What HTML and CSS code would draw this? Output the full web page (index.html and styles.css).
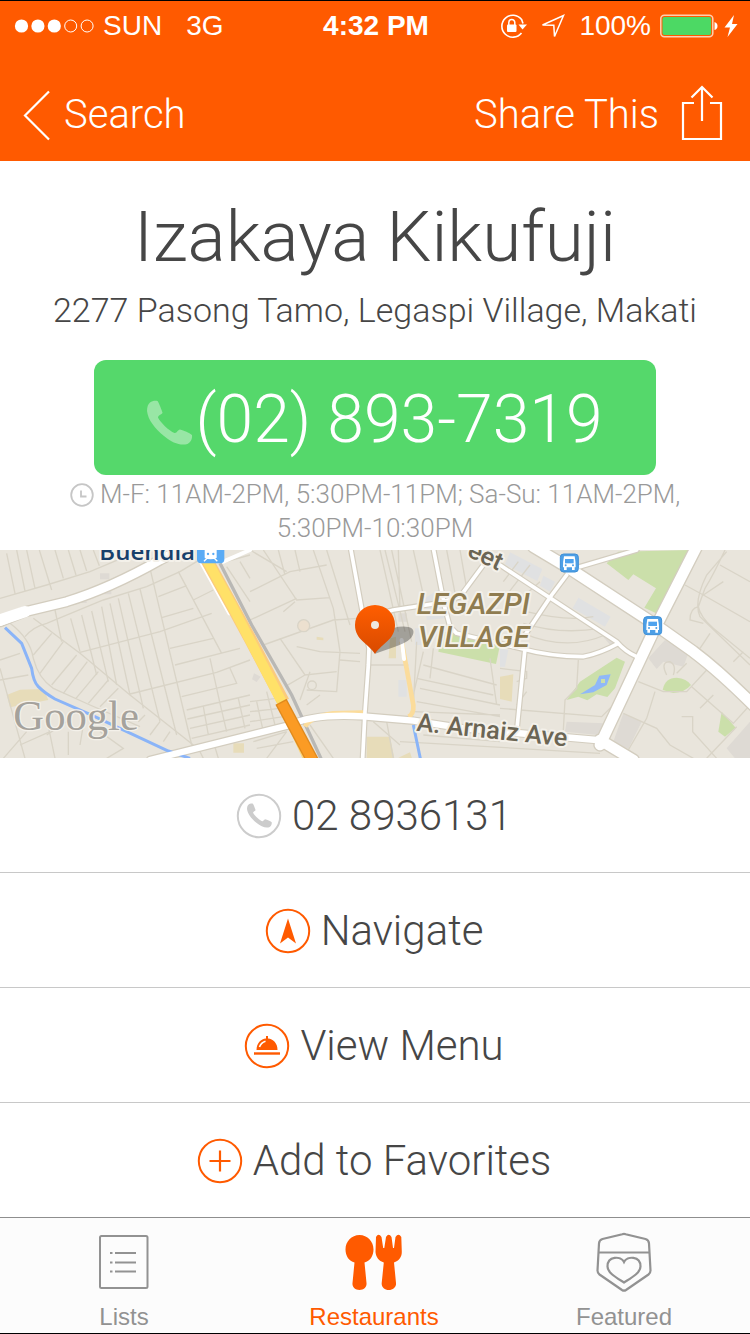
FILE: index.html
```html
<!DOCTYPE html>
<html lang="en">
<head>
<meta charset="utf-8">
<meta name="viewport" content="width=device-width, initial-scale=1">
<title>Izakaya Kikufuji</title>
<link rel="stylesheet" href="styles.css">
</head>
<body>
<header class="top">
  <div class="status">
    <div class="status-side">
      <svg class="signal" width="80" height="14" viewBox="0 0 80 14" aria-hidden="true">
        <g fill="#fff"><circle cx="7.500" cy="7" r="6.600"/><circle cx="23.900" cy="7" r="6.600"/><circle cx="40.300" cy="7" r="6.600"/></g>
        <g fill="none" stroke="#fff"><circle cx="56.700" cy="7" r="6"/><circle cx="73.100" cy="7" r="6"/></g>
      </svg>
      <span class="carrier">SUN</span>
      <span>3G</span>
    </div>
    <div class="clock">4:32 PM</div>
    <div class="status-side status-end">
      <svg width="28" height="24" viewBox="0 0 28 24" aria-hidden="true">
        <path d="M22.500 19A11 11 0 1 1 22.600 5.500L24 9.500" fill="none" stroke="#fff" stroke-width="1.600"/>
        <path d="M19.500 10.500H28L23.500 15.500z" fill="#fff"/>
        <path d="M9.800 11V8.500a3 3 0 0 1 6 0V11" fill="none" stroke="#fff" stroke-width="1.500"/>
        <rect x="8" y="10.500" width="9.500" height="7.500" rx="1" fill="#fff"/>
      </svg>
      <svg class="arrow" width="24" height="24" viewBox="0 0 24 24" aria-hidden="true">
        <path d="M22.500 1.500L13.500 22.500L12.800 11.200L1.500 11z" fill="none" stroke="#fff" stroke-width="1.500"/>
      </svg>
      <span class="percent">100%</span>
      <svg class="battery" width="78" height="24" viewBox="0 0 78 24" aria-hidden="true">
        <rect x=".8" y="1.300" width="52" height="21.400" rx="3.500" fill="none" stroke="#ffd0b0" stroke-width="1.500"/>
        <rect x="2.500" y="3" width="48.600" height="18" rx="2" fill="#4cd964"/>
        <path d="M54.500 8q3 1 3 4t-3 4z" fill="#fff"/>
        <path d="M74 1L64.500 13.500H70L67.500 23L77.500 10H72z" fill="#fff"/>
      </svg>
    </div>
  </div>
  <nav class="navbar" aria-label="Page">
    <a class="nav-link" href="#search">
      <svg width="28" height="52" viewBox="0 0 28 52" aria-hidden="true"><path d="M27 2.500L3 26.500L27 50.500" fill="none" stroke="#fff" stroke-width="2.200"/></svg>
      <span class="back-label">Search</span>
    </a>
    <button class="nav-link" type="button">
      <span>Share This</span>
      <svg class="share-icon" width="42" height="56" viewBox="0 0 42 56" aria-hidden="true"><path d="M13 18H2V54H40V18H29M21 36V2.500M10.500 12.500L21 2L31.500 12.500" fill="none" stroke="#fff" stroke-width="2.200"/></svg>
    </button>
  </nav>
</header>

<main>
  <section class="details">
    <h1 class="name">Izakaya Kikufuji</h1>
    <p class="address">2277 Pasong Tamo, Legaspi Village, Makati</p>
    <a class="call" href="tel:028937319">
      <svg class="call-icon" width="48" height="48" viewBox="0 0 48 48" aria-hidden="true"><use href="#handset"/></svg>
      <span>(02) 893-7319</span>
    </a>
    <p class="hours">
      <svg class="hours-icon" width="24" height="24" viewBox="0 0 24 24" aria-hidden="true"><circle cx="12" cy="12" r="10.800" fill="none" stroke="#c6c6c6" stroke-width="1.800"/><path d="M11 7.500V13.500H16.500" fill="none" stroke="#c6c6c6" stroke-width="1.800"/></svg>
      M-F: 11AM-2PM, 5:30PM-11PM; Sa-Su: 11AM-2PM, 5:30PM-10:30PM
    </p>
  </section>

  <svg class="map" viewBox="0 15 2250 624" preserveAspectRatio="xMidYMid slice" role="img" aria-label="Map of Legazpi Village">
    <defs>
      <linearGradient id="pinFill" x1="0" y1="0" x2="0" y2="1"><stop offset="0" stop-color="#ff5e00"/><stop offset="1" stop-color="#d84a00"/></linearGradient>
      <path id="handset" d="M3 2.500C5 .8 9 .2 10.800 1.200C12.500 4 14 8.500 15.500 12.500C15.500 14.500 11 15 11 17.500C13 22 22 31 27.500 33C30 33.500 30.500 30 33 29.600C37 30.500 42 33 45 35C45.500 39 43.500 42.500 40.500 44C33.500 46 25.500 43 17 36C8 28.500 1 20 0 11C0 7 1 4 3 2.500Z"/>
      <g id="bus">
        <rect x="-27" y="-27" width="54" height="54" rx="10" fill="#4d9fe6" stroke="#3e8fd6" stroke-width="3"/>
        <path d="M-16-20H16Q20 0 19 13H-19Q-20 0-16-20Z" fill="#fff"/>
        <rect x="-13" y="-12" width="26" height="13" fill="#4fa3ee"/>
        <path d="M-16 12h8v9h-8zM8 12h8v9h-8z" fill="#fff"/>
        <circle cx="-11" cy="7" r="3" fill="#4d9fe6"/><circle cx="11" cy="7" r="3" fill="#4d9fe6"/>
      </g>
    </defs>
    <rect y="0" width="2250" height="660" fill="#e9e5dc"/>

    <g fill="#dedad4">
      <path d="M1995 285L2065 325L2050 365L1990 350L1970 372L1945 340ZM1870 505L1925 530L1885 612L1840 590ZM1700 530L1810 535L1795 570L1695 560ZM2180 610L2250 530V640H2205ZM1805 270L1845 285L1835 305Z"/>
      <path d="M300 85h28v18h-28zM312 130h22v18h-22zM240 160h20v14h-20zM762 385l20 10-12 16-14-8zM1195 205h26v25h-26z"/>
    </g>
    <path d="M1530 22L1627 72L1612 108L1515 58ZM1630 92L1665 110L1650 140L1620 122ZM1735 158L1832 215L1815 245L1718 190ZM1275 160l45-30 15 90-55 5zM1245 250h25v50h-25zM1195 405h25v50h-25zM1500 310l25 5-10 50h-15z" fill="#e0e1e2"/>
    <path d="M20 450L60 434L130 432L145 465L30 487ZM700 595h32v28h-32zM1100 575H1170L1183 640H1100ZM1195 638L1230 622L1236 640ZM1500 395L1540 388L1535 470L1500 462ZM1170 280l18-5v65h-22zM950 275l20 3v8l-20-2z" fill="#e7dcb9"/>
    <g fill="#cbdfaa">
      <path d="M1855 20L2070 15L1975 208L1933 188L1968 130L1900 88L1885 105L1820 55Z"/>
      <path d="M1700 465L1740 410L1850 338L1875 350L1845 430L1822 456L1790 448L1762 466L1735 455Z"/>
      <path d="M1988 435Q1995 398 2030 398Q2060 400 2073 420Q2055 442 2020 444Z"/>
      <path d="M2165 500L2207 548L2175 575L2155 560Z"/>
      <path d="M1325 258L1500 300L1488 357L1315 320Z"/>
    </g>
    <path d="M1740 448L1785 420L1798 392L1832 388L1820 420L1780 442ZM1803 402v12h12v-12z" fill="#8fb8f8" fill-rule="evenodd"/>

    <g class="parcels" fill="none" stroke="#d9d4c7" stroke-width="4">
      <path d="M20 25L45 145M50 15L75 138M80 15L105 130M118 15L155 135M165 15L190 100M205 15L228 90M240 15L260 78M280 15L298 62M320 15L335 45M0 160L140 120L270 80L400 25"/>
      <path d="M30 235Q90 280 100 340Q115 400 160 430L270 480L420 545M75 275Q100 245 140 235L310 165L440 125L540 80L640 20M100 220L240 325L390 450L580 600"/>
      <path d="M100 330L155 265M120 385L190 290M155 420L230 330M190 445L262 350M228 460L295 380M265 475L325 405M300 485L355 430M415 530L435 510M450 570L480 530M490 590L510 560"/>
      <path d="M165 195L185 290M212 220L240 320M245 210L290 390M275 198L325 410M305 185L350 420M330 175L390 450M355 160L430 490M385 145L480 530M420 132L530 570M450 70L575 600"/>
      <path d="M240 322L480 260L635 205M390 447L650 382L750 345M475 155L560 122M485 218L580 190M510 310L640 280M525 360L720 310M545 455L710 415L690 370M560 495L750 450M562 522L750 480M570 550L750 510M575 580L750 540M535 80L665 325M630 340L660 475M610 485L625 570M660 475L680 560M715 460L735 550M580 165L640 135"/>
      <path d="M0 345L60 325M0 405L85 390M0 370L75 640M205 560V630M140 520L165 640M200 530L140 570M250 540L240 600M300 560L370 610L320 640M80 560L10 640M60 600L150 560"/>
      <path d="M660 55L750 30M680 65L750 170M720 50L750 100M590 600L610 640M640 590L655 640"/>
      <path d="M750 140L870 80L980 60M790 15L890 165L990 158M835 15L855 90M885 15L900 80M940 15L1000 190L1020 320M980 15L1050 240M790 300L1000 225L1075 220M750 225L890 160M860 80L750 15"/>
      <path d="M890 305L960 320L1080 325M840 280L915 390L1010 380M915 390L855 425M1020 320L1010 440L920 435M1080 350L1020 345M960 450L920 480M885 170L850 200M1110 360H1225M930 380L900 465"/>
      <path d="M1140 15L1195 260M1155 15L1215 260M1175 15L1235 290M1195 15L1200 200M1240 15L1270 150M1340 15L1370 170M1380 15L1400 130M1250 290L1240 480M1250 400L1480 450M1270 360L1490 420M1260 430L1500 480M1250 470L1500 515M1300 310L1290 400M1270 320L1240 450M1470 340L1490 480M1240 500L1500 510M1200 590L1550 610L1800 625M1270 570L1500 590M1120 530L1200 600"/>
      <path d="M750 470L830 460M750 500L840 490M750 530L850 515M770 470L790 560M800 440L825 540M760 590L860 560M770 610L880 590M860 560L800 640M930 540L1000 640M1160 530L1180 640"/>
      <path d="M1580 200Q1700 230 1780 215M1570 235Q1680 270 1800 250M1570 265Q1700 320 1815 270M1510 110L1555 50M1520 150L1590 60M1530 190L1620 110M1735 345L1730 430L1695 465L1690 555M1500 490L1805 515L1840 480M1580 440L1550 480M1500 370L1580 380V400L1550 410"/>
      <path d="M2180 20L2120 90Q2080 170 2100 215L2250 360M2175 15Q2140 90 2115 130L2095 185Q2100 215 2140 250L2250 340M2055 120L2110 150L2250 230M2160 60L2250 110M2110 150L2170 110M2095 185Q2070 190 2070 225L2110 235M2130 265L2100 310M2230 320L2200 350M1915 410L1990 440L2060 440L2120 375M2075 425L2200 535L2250 480M2120 640L2210 545M1870 505L1970 550L2010 600L2080 640M1965 440L1940 520L1885 615M2000 390Q1980 350 2010 350Q2030 360 2020 390M2030 385L2060 355M2100 490L2140 450M2045 515H2078V560L2150 640"/>
      <circle cx="911" cy="242" r="18" fill="#ece0cf"/><circle cx="936" cy="421" r="13" fill="#e9e5dc"/>
    </g>

    <g class="casing">
      <path d="M0 230L75 200L200 170Q330 130 480 45L540 15" stroke-width="34"/>
      <path d="M450 645L750 570L870 540Q940 505 1090 514L1240 527L1390 550L1790 585" stroke-width="26"/>
      <path d="M1600 5L1700 65L1960 235L2080 320Q2160 380 2265 485M2090 5L1960 260L1800 600M1800 585L1900 645" stroke-width="40"/>
      <path d="M1052 10L1085 190L1107 310L1105 360L1095 500L1088 640M1125 210L1180 195L1310 175L1380 155L1450 60M1300 10L1335 190L1350 245L1370 265L1560 310Q1650 335 1750 335Q1800 325 1855 295M1500 60L1850 290Q1875 320 1910 335M1700 90L1655 150L1575 270M1575 310L1550 560M1740 65L1910 15" stroke-width="18"/>
    </g>
    <path d="M660 55L755 240L875 450L965 645" fill="none" stroke="#b9b8b5" stroke-width="10"/>
    <path d="M15 248L65 295L95 370Q100 410 115 425Q135 445 165 462L270 508L505 618L570 640M1240 540L1262 645" fill="none" stroke="#8ab4f8" stroke-width="9"/>
    <path d="M915 545Q930 515 1000 505L1090 503M1205 290L1240 480Q1242 508 1225 515" fill="none" stroke="#fbdc9b" stroke-width="14"/>
    <g class="roads">
      <path d="M0 225L75 200" stroke-width="34"/>
      <path d="M0 230L75 200L200 170Q330 130 480 45L540 15" stroke-width="26"/>
      <path d="M450 645L750 570L870 540Q940 505 1090 514L1240 527L1390 550L1790 585" stroke-width="19"/>
      <path d="M1600 5L1700 65L1960 235L2080 320Q2160 380 2265 485M2090 5L1960 260L1800 600M1800 585L1900 645" stroke-width="32"/>
      <path d="M1052 10L1085 190L1107 310L1105 360L1095 500L1088 640M1125 210L1180 195L1310 175L1380 155L1450 60M1300 10L1335 190L1350 245L1370 265L1560 310Q1650 335 1750 335Q1800 325 1855 295M1500 60L1850 290Q1875 320 1910 335M1700 90L1655 150L1575 270M1575 310L1550 560M1740 65L1910 15" stroke-width="11"/>
      <path d="M670 50L750 15M605 55L688 205M640 55L692 152M1205 285L1212 342" stroke-width="12"/>
    </g>
    <path d="M872 545L915 640" fill="none" stroke="#fbd67c" stroke-width="14"/>
    <path d="M615 35L695 180L755 290L850 470" fill="none" stroke="#fbcb7c" stroke-width="38"/>
    <path d="M615 35L695 180L752 290L845 470" fill="none" stroke="#ffe168" stroke-width="30"/>
    <path d="M843 470L942 655" fill="none" stroke="#e08a1e" stroke-width="38"/>
    <path d="M845 474L942 655" fill="none" stroke="#fb9b24" stroke-width="30"/>

    <g transform="translate(632 29)">
      <rect x="-41" y="-30" width="82" height="56" rx="12" fill="#5aabf5"/>
      <path d="M-16-24H16V8Q0 16-16 8ZM-20 20L-8 8M20 20L8 8" fill="#fff" stroke="#fff" stroke-width="4"/>
      <circle cx="-8" cy="-2" r="3.500" fill="#5aabf5"/><circle cx="8" cy="-2" r="3.500" fill="#5aabf5"/>
    </g>
    <use href="#bus" x="1708" y="54"/>
    <use href="#bus" x="1958" y="242"/>

    <text class="map-station" x="298" y="45">Buendia</text>
    <g class="map-area"><text x="1250" y="208">LEGAZPI</text><text x="1254" y="306">VILLAGE</text></g>
    <g class="map-street"><text transform="translate(1248 557) rotate(6)">A. Arnaiz Ave</text><text transform="translate(1398 32) rotate(25)">eet</text></g>
    <text class="map-brand" x="40" y="555">Google</text>

    <path d="M1125 326Q1160 250 1195 245Q1245 240 1240 265Q1235 290 1185 305Z" fill="#000" opacity=".3"/>
    <path d="M1125 327C1105 295 1065 285 1065 240A60 60 0 0 1 1185 240C1185 285 1145 295 1125 327Z" fill="url(#pinFill)"/>
    <circle cx="1125" cy="240" r="12" fill="#eee8df"/>
  </svg>

  <div class="actions">
    <a class="action" href="tel:028936131">
      <svg class="action-icon" width="46" height="46" viewBox="0 0 46 46" aria-hidden="true"><circle cx="23" cy="23" r="21.200" fill="none" stroke="#ccc" stroke-width="2"/><use href="#handset" transform="translate(11 10) scale(.55)" fill="#ccc"/></svg>
      <span>02 8936131</span>
    </a>
    <button class="action" type="button">
      <svg class="action-icon" width="46" height="46" viewBox="0 0 46 46" aria-hidden="true"><circle cx="23" cy="23" r="21.200" fill="none" stroke="#ff5a00" stroke-width="2"/><path d="M23 10.500L31 35.500L23 29.500L15 35.500Z" fill="#ff5a00"/></svg>
      <span>Navigate</span>
    </button>
    <button class="action" type="button">
      <svg class="action-icon" width="46" height="46" viewBox="0 0 46 46" aria-hidden="true"><circle cx="23" cy="23" r="21.200" fill="none" stroke="#ff5a00" stroke-width="2"/><path d="M12.500 27C12.500 20 17 16 22 15.500V13h2v2.500C29 16 33.500 20 33.500 27Z" fill="#ff5a00"/><path d="M15.500 24Q17 19.500 21.500 18.200" fill="none" stroke="#fff" stroke-width="1.600"/><path d="M10 30.500H36" stroke="#ff5a00" stroke-width="2.400"/></svg>
      <span>View Menu</span>
    </button>
    <button class="action" type="button">
      <svg class="action-icon" width="46" height="46" viewBox="0 0 46 46" aria-hidden="true"><circle cx="23" cy="23" r="21.200" fill="none" stroke="#ff5a00" stroke-width="2"/><path d="M12.500 23H33.500M23 12.500V33.500" stroke="#ff5a00" stroke-width="2.200"/></svg>
      <span>Add to Favorites</span>
    </button>
  </div>
</main>

<nav class="tabs" aria-label="Sections">
  <a class="tab" href="#lists">
    <svg width="60" height="60" viewBox="0 0 60 60" aria-hidden="true"><rect x="6" y="4" width="47.500" height="52" rx="1.500" fill="none" stroke="#929292" stroke-width="2"/><path d="M21 21H42M21 30.500H42M21 39.500H42M16 21h2.500M16 30.500h2.500M16 39.500h2.500" stroke="#929292" stroke-width="2.200"/></svg>
    <span>Lists</span>
  </a>
  <a class="tab tab-on" href="#restaurants" aria-current="page">
    <svg width="60" height="60" viewBox="0 0 60 60" fill="#ff5a00" aria-hidden="true"><path d="M15.500 3C23.500 3 29.500 9.500 29.500 17.500C29.500 24 26 29 20.500 30.500L22.500 51C23 55 20 58 15.500 58S8 55 8.500 51L10.500 30.500C5 29 1.500 24 1.500 17.500C1.500 9.500 7.500 3 15.500 3Z"/><path d="M32 5Q34.500 .5 37.500 5L39.200 16H40.300L42 5Q44.700 .5 47.500 5L49 16H50L51.500 5Q54.500 .5 57.300 5L57.800 20C57.800 25.500 54.500 29 50 30.500L52 51C52.500 55 49 58 44.800 58S37.300 55 37.700 51L39.800 30.500C35 29 32 25.500 31.500 20Z"/></svg>
    <span>Restaurants</span>
  </a>
  <a class="tab" href="#featured">
    <svg width="60" height="60" viewBox="0 0 60 60" fill="none" stroke="#929292" stroke-width="2.200" aria-hidden="true"><path d="M28.300 2.300Q30 1.500 31.700 2.300L51.500 7Q54.800 8 55 11.500L56.500 38.500Q56.500 41 54.500 42.500L32 58Q30 59.300 28 58L5.500 42.500Q3.500 41 3.500 38.500L5 11.500Q5.200 8 8.500 7Z"/><path d="M5 20.500H55"/><path d="M30 30C27 24 13.500 23.500 13.500 34.500C13.500 41 23 46 30 50.500C37 46 46.500 41 46.500 34.500C46.500 23.500 33 24 30 30Z"/></svg>
    <span>Featured</span>
  </a>
</nav>
</body>
</html>
```
FILE: styles.css
```css
* { box-sizing: border-box; }
body {
  margin: 0;
  min-height: 100vh;
  display: flex;
  flex-direction: column;
  background: #fff;
  color: #464646;
  font-family: Roboto, "Open Sans", sans-serif;
  font-weight: 300;
  border-top: 1px solid #000;
  border-bottom: 1px solid #000;
}
h1, p { margin: 0; font-weight: 300; }
a { color: inherit; text-decoration: none; }
button { border: 0; padding: 0; background: none; color: inherit; font: inherit; cursor: pointer; }
svg { flex: none; }

.top { background: #ff5a00; color: #fff; }
.status {
  display: grid;
  grid-template-columns: 1fr auto 1fr;
  align-items: center;
  height: 50px;
  padding: 0 12px 0 14px;
  font: 28px/32px "Liberation Sans", Arial, sans-serif;
}
.status-side { display: flex; align-items: center; }
.status-end { justify-content: flex-end; }
.carrier { margin: 0 24px 0 9px; }
.clock { font-weight: 700; }
.arrow { margin-left: 14px; }
.percent { margin: 0 9px 0 14px; }

.navbar {
  display: flex;
  justify-content: space-between;
  align-items: center;
  height: 110px;
  padding: 18px 27px 0 22px;
  font-size: 40px;
  line-height: 48px;
}
.nav-link { display: flex; align-items: center; }
.back-label { margin-left: 14px; }
.share-icon { margin: 0 0 4px 22px; }

.details {
  display: flex;
  flex-direction: column;
  align-items: center;
  padding: 34px 0 4px;
  text-align: center;
}
.name { font-size: 71px; line-height: 84px; }
.address { margin-top: 10px; font-size: 34px; line-height: 42px; }
.call {
  display: flex;
  justify-content: center;
  align-items: center;
  width: 75%;
  margin-top: 29px;
  padding: 18px 0 13px;
  border-radius: 12px;
  background: #55d86b;
  color: #fff;
  font-size: 66px;
  line-height: 84px;
}
.call-icon { fill: #98e6a5; margin-top: 8px; }
.hours {
  padding: 2px 64px 1px;
  color: #999;
  font-size: 26px;
  line-height: 34px;
}
.hours-icon { vertical-align: -4px; }

.map { display: block; width: 100%; aspect-ratio: 750 / 208; }
.casing, .roads { fill: none; stroke-linejoin: round; stroke-linecap: round; }
.casing { stroke: #d3cdbf; }
.roads { stroke: #fff; }
.map text { paint-order: stroke; stroke: #f4f1ea; stroke-width: 12px; stroke-linejoin: round; }
.map-station { font: 600 72px "Open Sans", sans-serif; fill: #17406b; }
.map-area { font: italic 500 88px Roboto, sans-serif; fill: #8f7c50; }
.map-street { font: 500 76px Roboto, sans-serif; fill: #6b6554; }
.map .map-brand { font: 128px "Liberation Serif", serif; fill: #a5a29c; stroke-width: 8px; }

.action {
  display: flex;
  justify-content: center;
  align-items: center;
  gap: 10px;
  width: 100%;
  height: 115px;
  padding: 2px 2px 0 0;
  border-bottom: 1px solid #c8c8c8;
  font-size: 42px;
  line-height: 50px;
}
.action:last-child { border-bottom: 0; height: 114px; }

.tabs {
  display: grid;
  grid-template-columns: repeat(3, 1fr);
  margin-top: auto;
  border-top: 1px solid #8e8e8e;
  background: #fcfcfc;
  color: #929292;
  font: 24px/28px "Liberation Sans", Arial, sans-serif;
}
.tab { display: flex; flex-direction: column; align-items: center; gap: 11px; padding: 14px 2px 2px 0; }
.tab-on { color: #ff5a00; }
```
